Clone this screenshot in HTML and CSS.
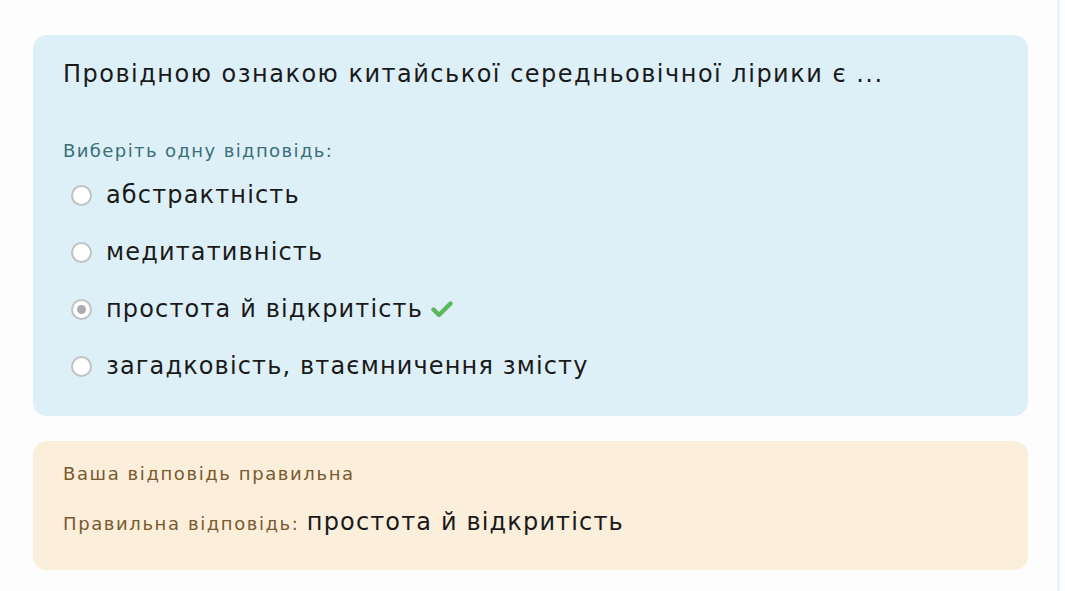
FILE: index.html
```html
<!DOCTYPE html>
<html lang="uk">
<head>
<meta charset="utf-8">
<link rel="stylesheet" href="styles.css">
</head>
<body>
<div class="page">
  <main class="content">
    <section class="card question">
      <h2 class="qtext">Провідною ознакою китайської середньовічної лірики є ...</h2>
      <div class="prompt">Виберіть одну відповідь:</div>
      <div class="answers">
        <label class="opt"><span class="radio"></span><span class="label">абстрактність</span></label>
        <label class="opt"><span class="radio"></span><span class="label">медитативність</span></label>
        <label class="opt"><span class="radio checked"></span><span class="label">простота й відкритість</span>
          <svg class="tick" width="22" height="18" viewBox="0 0 22 18"><path d="M2.5 9.5 L8 15 L19.5 3.5" fill="none" stroke="#5cb85c" stroke-width="4.4" stroke-linecap="round" stroke-linejoin="round"/></svg>
        </label>
        <label class="opt"><span class="radio"></span><span class="label">загадковість, втаємничення змісту</span></label>
      </div>
    </section>
    <section class="card feedback">
      <div class="fb-line">Ваша відповідь правильна</div>
      <div class="fb-line right">Правильна відповідь: <span class="ans">простота й відкритість</span></div>
    </section>
  </main>
  <div class="rail"></div>
</div>
</body>
</html>
```
FILE: styles.css
```css
html, body {
  margin: 0;
  padding: 0;
  background: #fdfdfd;
  font-family: "DejaVu Sans", "Noto Sans", sans-serif;
}
.page {
  display: flex;
  height: 591px;
  overflow: hidden;
}
.content {
  width: 995px;
  padding: 35px 0 0 33px;
  display: flex;
  flex-direction: column;
  gap: 25px;
}
.rail {
  margin-left: 29px;
  width: 3px;
  background: #e9f2f9;
}
.card {
  border-radius: 14px;
  padding: 0 30px;
}
.question {
  background: #def0f7;
  height: 381px;
  box-sizing: border-box;
  padding-top: 22px;
}
.qtext {
  margin: 0;
  font-weight: normal;
  font-size: 24px;
  letter-spacing: 1.5px;
  line-height: 34px;
  color: #1a1a1a;
}
.prompt {
  margin-top: 48px;
  font-size: 18px;
  letter-spacing: 1.4px;
  line-height: 24px;
  color: #3b6e7b;
}
.answers {
  margin-top: 15px;
  display: flex;
  flex-direction: column;
  gap: 23px;
}
.opt {
  display: flex;
  align-items: center;
  height: 34px;
  font-size: 24px;
  letter-spacing: 1.15px;
  color: #1a1a1a;
}
.radio {
  width: 17px;
  height: 17px;
  border: 2px solid #bfc3c6;
  border-radius: 50%;
  background: #fff;
  margin: 0 14px 0 8px;
  box-sizing: content-box;
  display: flex;
  align-items: center;
  justify-content: center;
}
.radio.checked::after {
  content: "";
  width: 9px;
  height: 9px;
  border-radius: 50%;
  background: #a9adb0;
}
.tick {
  margin-left: 8px;
}
.feedback {
  background: #fbeedb;
  height: 129px;
  box-sizing: border-box;
  padding-top: 20px;
}
.fb-line {
  font-size: 18px;
  letter-spacing: 1.6px;
  line-height: 26px;
  color: #7a5a2e;
}
.fb-line.right {
  margin-top: 22px;
}
.ans {
  font-size: 24px;
  letter-spacing: 1.15px;
  color: #1a1a1a;
}
```
